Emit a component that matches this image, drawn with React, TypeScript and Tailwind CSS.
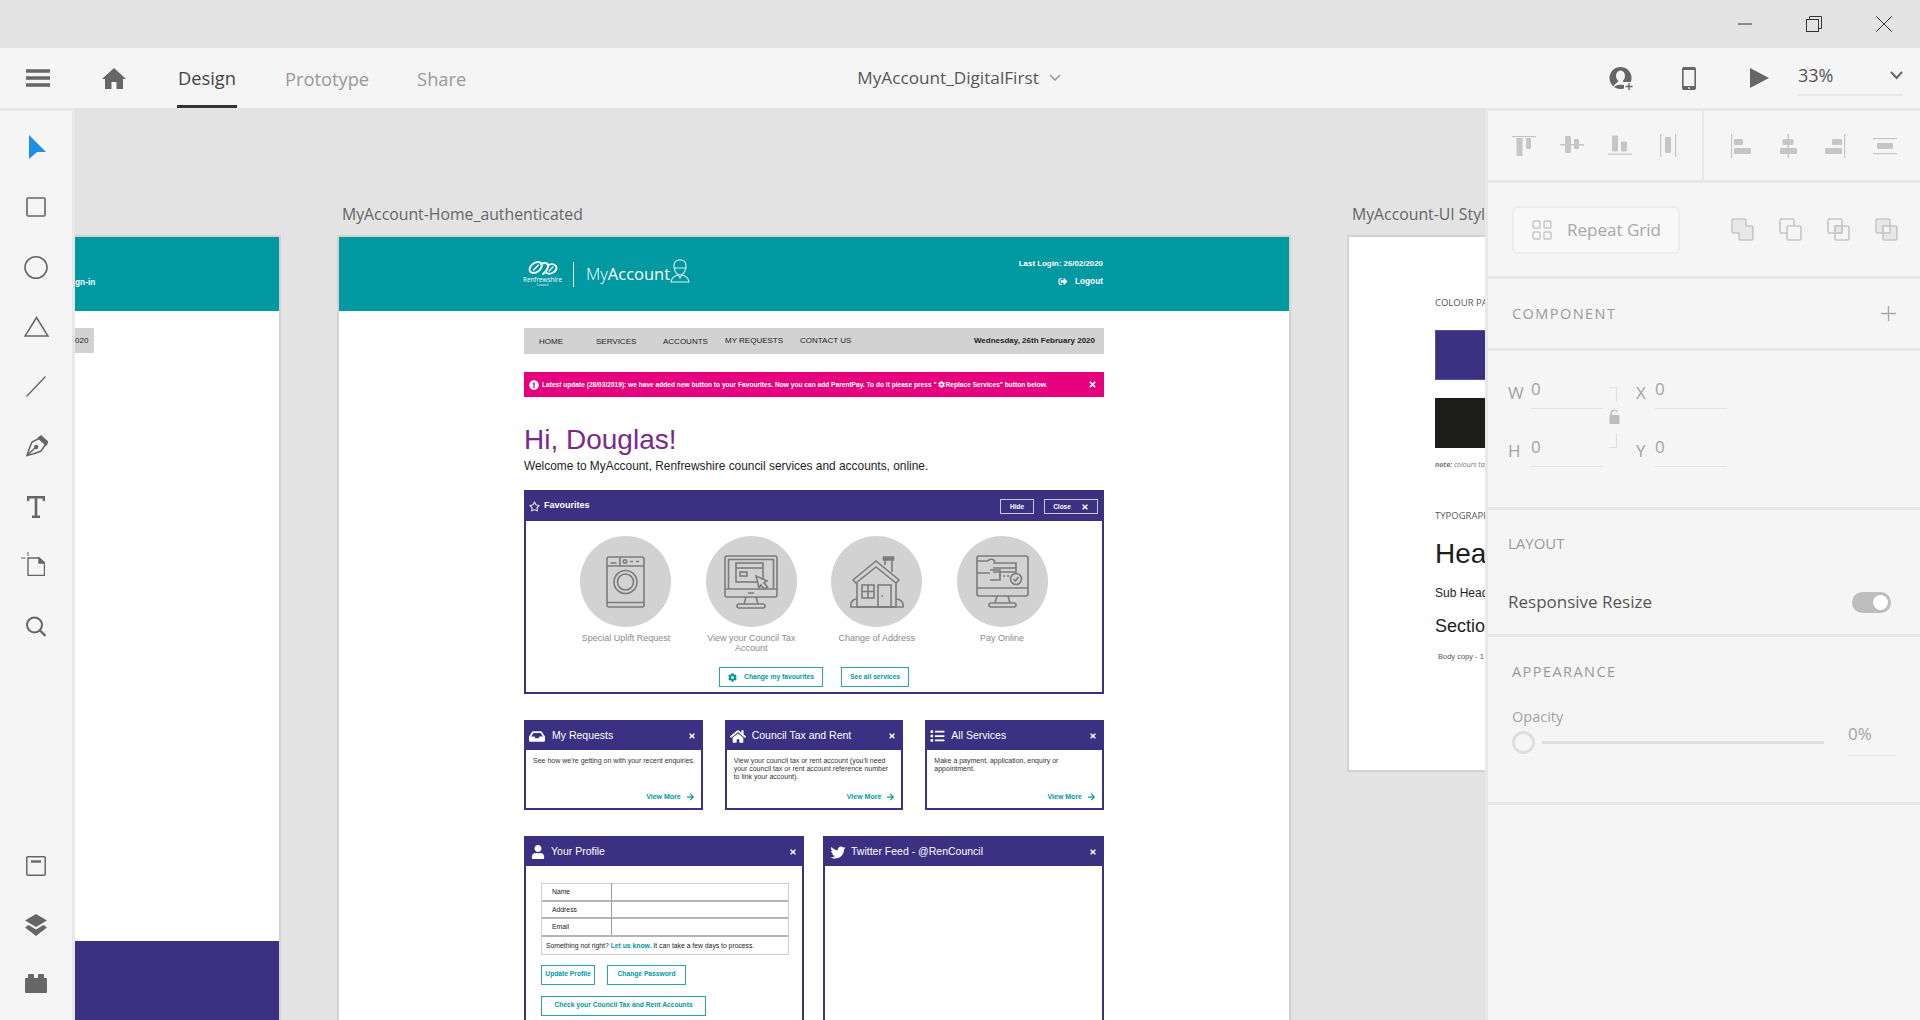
import type { ReactNode } from "react";
import {
  FaArrowRight,
  FaCog,
  FaExclamationCircle,
  FaHome,
  FaInbox,
  FaList,
  FaRegStar,
  FaSignOutAlt,
  FaTimes,
  FaTwitter,
  FaUser,
} from "react-icons/fa";

const ui = "font-['Open_Sans','Noto_Sans',sans-serif]";
const arial = "font-['Liberation_Sans',Arial,sans-serif]";

function Ic({ w, h, children, className = "" }: { w: number; h: number; children: ReactNode; className?: string }) {
  return (
    <svg width={w} height={h} viewBox={`0 0 ${w} ${h}`} className={`shrink-0 ${className}`}>
      {children}
    </svg>
  );
}

// left tool rail, y is the gap above each icon
const tools: { y: number; x: number; w: number; h: number; node: ReactNode }[] = [
  { y: 24, x: 3, w: 17, h: 24, node: <path d="M0 0 L17 17 L8 17 L0 24 Z" fill="#1c8fe6" /> },
  { y: 38, x: 0, w: 20, h: 20, node: <rect x="1" y="1" width="18" height="18" rx="1" fill="none" stroke="#666" strokeWidth="1.6" /> },
  { y: 39, x: -2, w: 24, h: 23, node: <ellipse cx="12" cy="11.5" rx="11" ry="10.7" fill="none" stroke="#666" strokeWidth="1.6" /> },
  { y: 37, x: -2, w: 25, h: 21, node: <path d="M12.5 1.5 L24 20 L1 20 Z" fill="none" stroke="#666" strokeWidth="1.5" /> },
  { y: 39, x: 0, w: 20, h: 21, node: <path d="M0.5 20.5 L19.5 0.5" stroke="#666" strokeWidth="1.3" /> },
  { y: 38, x: 0, w: 22, h: 22, node: (
    <g fill="none" stroke="#666" strokeWidth="1.6">
      <path d="M15 1 L21.5 7 L20 10 L12.5 3 Z" fill="#666" />
      <path d="M13 3.5 L6 7 C4 11 2.5 16 1 20.5 C6 19.5 11 18 15 16 L19.5 9.5" />
      <path d="M1.5 20 L9 13" />
      <circle cx="10.2" cy="12" r="1.4" fill="#666" />
    </g>
  ) },
  { y: 39, x: 1, w: 18, h: 22, node: <path d="M1 5 V1.3 H17 V5 M9 1 V20 M5 20.7 H13" fill="none" stroke="#666" strokeWidth="2.6" /> },
  { y: 34, x: -5, w: 24, h: 24, node: (
    <g fill="none" stroke="#666" strokeWidth="1.4">
      <path d="M7 6 H18 L23.5 11 V23.5 H7 Z" />
      <path d="M18 6 L23.5 11 H18 Z" fill="#666" />
      <path d="M0 6 H4.5 M7 0 V4" strokeWidth="1" />
    </g>
  ) },
  { y: 40, x: 0, w: 20, h: 21, node: (
    <g fill="none" stroke="#666" strokeWidth="2">
      <ellipse cx="8.5" cy="9" rx="7.5" ry="7.5" />
      <path d="M14 14.5 L19.5 20" strokeWidth="2.4" />
    </g>
  ) },
];

const bottomTools: { w: number; h: number; x: number; node: ReactNode }[] = [
  { w: 20, h: 20, x: 0, node: (
    <g fill="none" stroke="#666">
      <rect x="0.8" y="0.8" width="18.4" height="18.4" rx="1" strokeWidth="1.5" />
      <path d="M5 5.5 H15" strokeWidth="2.4" />
    </g>
  ) },
  { w: 22, h: 22, x: -1, node: (
    <g fill="#666">
      <path d="M11 0 L22 6.5 L11 13 L0 6.5 Z" />
      <path d="M3.5 11 L11 15.5 L18.5 11 L22 13.5 L11 22 L0 13.5 Z" />
    </g>
  ) },
  { w: 22, h: 19, x: -1, node: (
    <g fill="#666">
      <rect x="3" y="0" width="6" height="6" rx="1" />
      <rect x="13" y="0" width="6" height="6" rx="1" />
      <rect x="0" y="4" width="22" height="15" rx="1" />
    </g>
  ) },
];

function AlignIcon({ children }: { children: ReactNode }) {
  return (
    <Ic w={24} h={24}>
      <g fill="#c6c6c6">{children}</g>
    </Ic>
  );
}

const alignLeft: ReactNode[] = [
  <>
    <rect x="0" y="2" width="24" height="1.2" />
    <rect x="4.5" y="4" width="6" height="18" rx="1" />
    <rect x="14" y="4" width="5" height="11" rx="1" />
  </>,
  <>
    <rect x="0" y="10" width="24" height="1.5" />
    <rect x="5" y="2" width="6" height="17" rx="1" />
    <rect x="14" y="5" width="5" height="10" rx="1" />
  </>,
  <>
    <rect x="0" y="19.5" width="24" height="1.2" />
    <rect x="4" y="1.5" width="6" height="16" rx="1" />
    <rect x="13" y="7.5" width="6" height="10" rx="1" />
  </>,
  <>
    <rect x="4" y="0" width="1.2" height="23" />
    <rect x="19" y="0" width="1.2" height="23" />
    <rect x="9" y="3" width="6" height="16" rx="1" />
  </>,
];

const alignRight: ReactNode[] = [
  <>
    <rect x="2" y="0" width="1.2" height="24" />
    <rect x="5" y="5" width="9" height="6" rx="1" />
    <rect x="5" y="14" width="17" height="6" rx="1" />
  </>,
  <>
    <rect x="10.5" y="0" width="1.5" height="24" />
    <rect x="5.5" y="5" width="11" height="6" rx="1" />
    <rect x="3" y="14" width="17" height="6" rx="1" />
  </>,
  <>
    <rect x="19" y="0" width="1.2" height="24" />
    <rect x="7" y="5" width="10" height="6" rx="1" />
    <rect x="0" y="14" width="17" height="6" rx="1" />
  </>,
  <>
    <rect x="0" y="4" width="24" height="1.2" />
    <rect x="0" y="19" width="24" height="1.2" />
    <rect x="4" y="9" width="16" height="6" rx="1" />
  </>,
];

function BoolIcon({ n }: { n: number }) {
  const back = <rect x="1" y="1" width="14" height="14" rx="1.5" />;
  const front = <rect x="8" y="8" width="14" height="14" rx="1.5" />;
  return (
    <Ic w={24} h={24}>
      <g fill="none" stroke="#c6c6c6" strokeWidth="1.6">
        {n === 0 && <path d="M2.5 1 H13.5 Q15 1 15 2.5 V8 H20.5 Q22 8 22 9.5 V20.5 Q22 22 20.5 22 H9.5 Q8 22 8 20.5 V15 H2.5 Q1 15 1 13.5 V2.5 Q1 1 2.5 1 Z" fill="#e8e8e8" />}
        {n === 1 && (
          <>
            {back}
            <rect x="8" y="8" width="14" height="14" rx="1.5" fill="#f5f5f5" />
          </>
        )}
        {n === 2 && (
          <>
            {back}
            {front}
            <rect x="8" y="8" width="7" height="7" fill="#e8e8e8" />
          </>
        )}
        {n === 3 && (
          <>
            <rect x="1" y="1" width="14" height="14" rx="1.5" fill="#e8e8e8" />
            <rect x="8" y="8" width="14" height="14" rx="1.5" fill="#e8e8e8" />
            <rect x="8" y="8" width="7" height="7" fill="#f5f5f5" />
          </>
        )}
      </g>
    </Ic>
  );
}

function Underlined({ label, value, labelClass = "w-[23px]" }: { label: string; value: string; labelClass?: string }) {
  return (
    <div className="flex h-[48px] items-start">
      <span className={`mt-[10px] text-[17px] leading-[24px] text-[#a3a3a3] ${labelClass}`}>{label}</span>
      <div className="h-[38px] w-[72px] border-b border-[#e4e4e4] text-[17px] leading-[24px] text-[#a3a3a3]">
        <span className="mt-[6px] block">{value}</span>
      </div>
    </div>
  );
}

function Panel({ children, className = "" }: { children: ReactNode; className?: string }) {
  return <section className={`border-b-[3px] border-[#e8e8e8] ${className}`}>{children}</section>;
}

function RightPanel() {
  return (
    <aside className={`${ui} flex h-full w-[435px] shrink-0 flex-col border-t-[3px] border-l-[3px] border-[#e8e8e8] bg-[#f5f5f5]`}>
      <Panel className="flex h-[72px] items-center">
        <div className="flex h-full w-[216px] items-center gap-[24px] border-r-2 border-[#e8e8e8] pl-[24px]">
          {alignLeft.map((n, i) => (
            <AlignIcon key={i}>{n}</AlignIcon>
          ))}
        </div>
        <div className="flex items-center gap-[24px] pl-[25px]">
          {alignRight.map((n, i) => (
            <AlignIcon key={i}>{n}</AlignIcon>
          ))}
        </div>
      </Panel>
      <Panel className="flex h-[96px] items-center pl-[24px]">
        <div className="flex h-[48px] w-[168px] items-center rounded-[6px] border-2 border-[#ededed] bg-[#f8f8f8] pl-[18px]">
          <Ic w={20} h={20}>
            <g fill="none" stroke="#c6c6c6" strokeWidth="1.4">
              <rect x="1" y="1" width="7" height="7" rx="1" />
              <rect x="12" y="1" width="7" height="7" rx="1" />
              <rect x="1" y="12" width="7" height="7" rx="1" />
              <rect x="12" y="12" width="7" height="7" rx="1" />
            </g>
          </Ic>
          <span className="ml-[15px] text-[17px] whitespace-nowrap text-[#a8a8a8]">Repeat Grid</span>
        </div>
        <div className="ml-[51px] flex gap-[24px]">
          {[0, 1, 2, 3].map((n) => (
            <BoolIcon key={n} n={n} />
          ))}
        </div>
      </Panel>
      <Panel className="flex h-[72px] items-center justify-between pr-[24px] pl-[24px]">
        <span className="text-[14.5px] tracking-[0.1em] text-[#999]">COMPONENT</span>
        <Ic w={15} h={15}>
          <path d="M7.5 0 V15 M0 7.5 H15" stroke="#a8a8a8" strokeWidth="1.4" />
        </Ic>
      </Panel>
      <Panel className="flex h-[159px] pt-[20px] pl-[20px]">
        <div className="flex flex-col gap-[10px]">
          <Underlined label="W" value="0" />
          <Underlined label="H" value="0" />
        </div>
        <div className="mt-[16px] ml-[3px] flex h-[60px] w-[13px] shrink-0 flex-col items-start justify-between">
          <Ic w={14} h={61}>
            <path d="M3 0.5 H10.5 V15 M3 60.5 H10.5 V46" fill="none" stroke="#e0e0e0" strokeWidth="1.2" />
            <path d="M5 29 V26 A3.5 3.5 0 0 1 11.5 25" fill="none" stroke="#bdbdbd" strokeWidth="1.4" />
            <rect x="3.5" y="28" width="10" height="9" rx="1" fill="#bdbdbd" />
          </Ic>
        </div>
        <div className="ml-[17px] flex flex-col gap-[10px]">
          <Underlined label="X" value="0" labelClass="w-[19px]" />
          <Underlined label="Y" value="0" labelClass="w-[19px]" />
        </div>
      </Panel>
      <Panel className="h-[127px] pt-[19px] pr-[29px] pl-[20px]">
        <p className="text-[15px] leading-[28px] text-[#999]">LAYOUT</p>
        <div className="mt-[32px] flex items-center justify-between">
          <span className="text-[17px] leading-[26px] text-[#555]">Responsive Resize</span>
          <div className="flex h-[21px] w-[39px] items-center justify-end rounded-full bg-[#bdbdbd] pr-[3px]">
            <div className="h-[15px] w-[15px] rounded-full bg-white" />
          </div>
        </div>
      </Panel>
      <Panel className="h-[168px] pt-[24px] pr-[24px] pl-[24px]">
        <p className="text-[14.5px] leading-[22px] tracking-[0.1em] text-[#999]">APPEARANCE</p>
        <p className="mt-[23px] text-[14.5px] leading-[22px] text-[#a3a3a3]">Opacity</p>
        <div className="-mt-[6px] flex items-center">
          <div className="h-[23px] w-[23px] rounded-full border-[3px] border-[#dedede]" />
          <div className="ml-[7px] h-[3px] w-[282px] bg-[#dedede]" />
          <div className="mb-[6px] ml-[24px] h-[34px] w-[48px] border-b border-[#e4e4e4] text-[17px] leading-[24px] text-[#a3a3a3]">0%</div>
        </div>
      </Panel>
    </aside>
  );
}

function LogoMark() {
  return (
    <div className="flex w-[37px] flex-col items-center text-white">
      <Ic w={30} h={15}>
        <g fill="none" stroke="#fff" strokeWidth="1.9" strokeLinecap="round">
          <path d="M1.5 9 C2 3 8 0 12.5 1.5 C15.5 3 13 10 8 11.5 C4 12.5 1.5 11 1.5 9 Z" />
          <path d="M13 3 C17 1 21 2 20 6 C19 10 16 12 15 13" />
          <path d="M20 4.5 C23 2 28.5 3 28.5 7 C28.5 11 22 14 18.5 12" />
          <path d="M5.5 9 L10.5 4 M21 10 L25 6" strokeWidth="1.2" />
        </g>
      </Ic>
      <span className={`${ui} text-[6.3px] leading-[7px] whitespace-nowrap`}>Renfrewshire</span>
      <span className={`${ui} text-[3.5px] leading-[4px] whitespace-nowrap`}>Council</span>
    </div>
  );
}

const navItems = [
  { label: "HOME", w: 57, up: false },
  { label: "SERVICES", w: 67, up: false },
  { label: "ACCOUNTS", w: 62, up: false },
  { label: "MY REQUESTS", w: 75, up: true },
  { label: "CONTACT US", w: 70, up: true },
];

function Artboard({ children, className }: { children: ReactNode; className: string }) {
  return <div className={`absolute border-2 border-[#d2d2d2] bg-white ${className}`}>{children}</div>;
}

function WasherIcon() {
  return (
    <svg width="40" height="52" viewBox="0 0 40 52" fill="none" stroke="#7c7c7c" strokeWidth="1.6">
      <rect x="1" y="1" width="37" height="50" rx="2" />
      <path d="M1 10 H38 M14 1 V10 M1 46.5 H38" />
      <path d="M4.5 7 H10.5 M24 5.5 H27 M30 5.5 H33" />
      <circle cx="19" cy="5.5" r="1.7" />
      <circle cx="19.5" cy="26" r="11.5" />
      <circle cx="19.5" cy="26" r="8" />
    </svg>
  );
}

function TaxIcon() {
  return (
    <svg width="54" height="54" viewBox="0 0 54 54" fill="none" stroke="#7c7c7c" strokeWidth="1.6">
      <rect x="1" y="1" width="52" height="41" rx="2" />
      <path d="M4.5 34 V4.5 H49.5 V34 M1 34 H53 M24 38 H30" />
      <path d="M22 42 L20 49 M32 42 L34 49" />
      <rect x="13" y="49" width="28" height="4" rx="2" />
      <rect x="12" y="8" width="27" height="19" />
      <path d="M12 13 H39" />
      <rect x="16" y="17" width="7" height="4" />
      <path d="M32 21 L43 26 L40 28 L43.5 32 L40 34 L37 30 L35 33 Z" fill="#d2d2d2" />
    </svg>
  );
}

function HouseIcon() {
  return (
    <svg width="54" height="52" viewBox="0 0 54 52" fill="none" stroke="#7c7c7c" strokeWidth="1.6">
      <path d="M3 24 L26 5 L49 24 L46 27 L26 11 L6 27 Z" />
      <path d="M35 9 V2.5 H42 V16 M33.5 1 H43.5 V4 H33.5 Z" />
      <path d="M7 27 V51 H46 V27" />
      <path d="M7 43 C3 43 0 46 1 51 H53 C54 46 50 43 46 43" />
      <rect x="12" y="29" width="12" height="13" />
      <path d="M18 29 V42 M12 35.5 H24" />
      <rect x="28" y="29" width="13" height="22" />
      <path d="M31.5 40 H33" />
    </svg>
  );
}

function PayIcon() {
  return (
    <svg width="53" height="54" viewBox="0 0 53 54" fill="none" stroke="#7c7c7c" strokeWidth="1.6">
      <rect x="1" y="1" width="51" height="40" rx="2" />
      <path d="M1 33 H52 M1 18 H14 M1 6 H11 C15 3 18 4 19 7" />
      <path d="M21 41 L19 48 M32 41 L34 48" />
      <rect x="13" y="48" width="27" height="4" rx="2" />
      <path d="M17 8 H40 V22 M17 13 H40 M17 17 H40" />
      <path d="M14 15 H24 V25 H14" />
      <path d="M23 21 H33" strokeDasharray="2 2" />
      <circle cx="40" cy="24" r="5.5" fill="#d2d2d2" />
      <path d="M37.5 24 L39.5 26 L42.5 22" />
    </svg>
  );
}

const favourites = [
  { label: "Special Uplift Request", icon: <WasherIcon /> },
  { label: "View your Council Tax Account", icon: <TaxIcon /> },
  { label: "Change of Address", icon: <HouseIcon /> },
  { label: "Pay Online", icon: <PayIcon /> },
];

const cards = [
  {
    title: "My Requests",
    icon: <FaInbox className="h-[15px] w-[16px]" />,
    body: "See how we're getting on with your recent enquiries.",
    gap: "gap-[7px]",
  },
  {
    title: "Council Tax and Rent",
    icon: <FaHome className="h-[15px] w-[16px]" />,
    body: "View your council tax or rent account (you'll need\nyour council tax or rent account reference number\nto link your account).",
    gap: "gap-[6px]",
  },
  {
    title: "All Services",
    icon: <FaList className="h-[14px] w-[15px]" />,
    body: "Make a payment, application, enquiry or\nappointment.",
    gap: "gap-[6px]",
  },
];

function TealButton({ children, className }: { children: ReactNode; className: string }) {
  return (
    <div className={`flex h-[20px] items-center justify-center border border-[#2aa3a9] text-[6.7px] font-bold whitespace-nowrap text-[#00989f] ${className}`}>
      {children}
    </div>
  );
}

function HomeBoard() {
  return (
    <Artboard className={`${arial} top-[127px] left-[262px] h-[1000px] w-[954px] overflow-hidden`}>
      <header className="flex h-[74px] justify-center bg-[#0098a1]">
        <div className="flex h-full w-[580px] items-start justify-between">
          <div className="mt-[24px] flex items-center">
            <LogoMark />
            <div className="mx-[12px] h-[25px] w-px bg-white" />
            <span className={`${ui} text-[16.5px] leading-[26px] font-light whitespace-nowrap text-white`}>
              My<span className="font-normal">Account</span>
            </span>
            <Ic w={20} h={24} className="-mt-[6px]">
              <g fill="none" stroke="#d9f0f1" strokeWidth="1.1">
                <path d="M4.5 9 C4.5 14 8 16 10 16 C12 16 15.5 14 15.5 9" />
                <path d="M4 9 V6.5 C4 -1 16 -1 16 6.5 V9 Z" />
                <path d="M1 23 C1.5 18 6 16.5 8 16 L10 19 L12 16 C14 16.5 18.5 18 19 23 Z" />
              </g>
            </Ic>
          </div>
          <div className="mt-[19px] mr-px flex flex-col items-end text-white">
            <span className="text-[7.9px] leading-[16px] font-bold whitespace-nowrap">Last Login: 26/02/2020</span>
            <span className="flex items-center gap-[7px] text-[8.3px] leading-[18px] font-bold whitespace-nowrap">
              <FaSignOutAlt className="h-[9px] w-[10px]" /> Logout
            </span>
          </div>
        </div>
      </header>
      <div className="mx-auto w-[580px]">
        <nav className="mt-[17px] flex h-[26px] items-center justify-between bg-[#d2d2d2] pr-[9px] pl-[15px] text-[8px] text-[#222]">
          <div className="flex items-center">
            {navItems.map((n) => (
              <span key={n.label} style={{ width: n.w }} className={`whitespace-nowrap ${n.up ? "" : "pt-[2px]"}`}>
                {n.label}
              </span>
            ))}
          </div>
          <span className="font-bold whitespace-nowrap">Wednesday, 26th February 2020</span>
        </nav>
        <div className="mt-[18px] flex h-[25px] items-center justify-between bg-[#e6007e] pr-[7px] pl-[5px] text-white">
          <div className="flex items-center gap-[3px] text-[6.6px] font-bold whitespace-nowrap">
            <FaExclamationCircle className="h-[10px] w-[10px]" />
            <span className="inline-flex items-center">
              Latest update (28/03/2019): we have added new button to your Favourites. Now you can add ParentPay. To do it please press "
              <FaCog className="mx-px h-[7px] w-[7px]" /> Replace Services" button below.
            </span>
          </div>
          <FaTimes className="h-[9px] w-[9px]" />
        </div>
        <h1 className="mt-[26px] text-[28px] leading-[34px] font-normal text-[#7b2a8c]">Hi, Douglas!</h1>
        <p className="mt-px text-[11.9px] leading-[16px] text-[#1d1d1b]">Welcome to MyAccount, Renfrewshire council services and accounts, online.</p>

        <section className="mt-[16px] flex h-[204px] flex-col border-2 border-[#3c3082]">
          <div className="flex h-[29px] shrink-0 items-center justify-between bg-[#3c3082] pr-[4px] pl-[3px] text-white">
            <div className="flex items-center gap-[4px] pb-[1px] text-[9px] font-bold">
              <FaRegStar className="h-[11px] w-[11px]" /> Favourites
            </div>
            <div className="flex items-center gap-[10px] text-[6.5px] font-bold">
              <span className="flex h-[15px] w-[34px] items-center justify-center border border-[#c9c6e0]">Hide</span>
              <span className="flex h-[15px] w-[54px] items-center justify-center gap-[10px] border border-[#c9c6e0]">
                Close <FaTimes className="h-[8px] w-[8px]" />
              </span>
            </div>
          </div>
          <div className="flex justify-center pt-[15px]">
            {favourites.map((f) => (
              <div key={f.label} className="flex w-[125.4px] flex-col items-center">
                <div className="flex h-[91px] w-[91px] items-center justify-center rounded-full bg-[#d2d2d2]">{f.icon}</div>
                <p className="mt-[6px] w-[96px] text-center text-[9px] leading-[10px] text-[#8a8a8a]">{f.label}</p>
              </div>
            ))}
          </div>
          <div className="mt-auto flex justify-center gap-[18px] pb-[5px]">
            <TealButton className="w-[104px] gap-[7px]">
              <FaCog className="h-[9px] w-[9px]" /> Change my favourites
            </TealButton>
            <TealButton className="w-[68px]">See all services</TealButton>
          </div>
        </section>

        <div className="mt-[26px] grid grid-cols-3 gap-[22px]">
          {cards.map((c) => (
            <section key={c.title} className="flex h-[90px] flex-col border-2 border-[#3c3082]">
              <div className="flex h-[28px] shrink-0 items-center bg-[#3c3082] pr-[5px] pl-[3px] text-white">
                <span className={`flex min-w-0 flex-1 items-center ${c.gap} text-[10.5px] whitespace-nowrap`}>
                  {c.icon}
                  {c.title}
                </span>
                <FaTimes className="h-[8px] w-[8px]" />
              </div>
              <p className="pt-[7px] pl-[7px] text-[7px] leading-[8px] whitespace-pre-line text-[#333]">{c.body}</p>
              <div className="mt-auto flex items-center justify-end gap-[5px] pr-[6px] pb-[6px] text-[7px] font-bold text-[#00989f]">
                View More <FaArrowRight className="h-[8px] w-[9px]" />
              </div>
            </section>
          ))}
        </div>

        <div className="mt-[26px] grid grid-cols-[280px_281px] gap-[19px]">
          <section className="h-[300px] border-2 border-[#3c3082]">
            <div className="flex h-[28px] items-center justify-between bg-[#3c3082] pr-[5px] pl-[5px] text-white">
              <span className="flex items-center gap-[6px] text-[10.5px]">
                <FaUser className="h-[14px] w-[14px]" /> Your Profile
              </span>
              <FaTimes className="h-[8px] w-[8px]" />
            </div>
            <div className="px-[15px] pt-[17px]">
              <div className="w-[248px] border border-[#cfcfcf] text-[6.8px] text-[#222]">
                {["Name", "Address", "Email"].map((l) => (
                  <div key={l} className="flex h-[17.5px] items-center border-b-2 border-[#b5b5b5]">
                    <span className="w-[70px] border-r border-[#9c9c9c] pl-[10px] leading-[17px]">{l}</span>
                  </div>
                ))}
                <p className="pl-[4px] text-[6.8px] leading-[17px]">
                  Something not right? <span className="font-bold text-[#00989f]">Let us know.</span> It can take a few days to process.
                </p>
              </div>
              <div className="mt-[10px] flex gap-[12px]">
                <TealButton className="w-[54px]">Update Profile</TealButton>
                <TealButton className="w-[79px]">Change Password</TealButton>
              </div>
              <TealButton className="mt-[11px] w-[165px]">Check your Council Tax and Rent Accounts</TealButton>
            </div>
          </section>
          <section className="h-[300px] border-2 border-[#3c3082]">
            <div className="flex h-[28px] items-center justify-between bg-[#3c3082] pr-[5px] pl-[5px] text-white">
              <span className="flex items-center gap-[5px] text-[10.5px] whitespace-nowrap">
                <FaTwitter className="h-[15px] w-[16px]" /> Twitter Feed - @RenCouncil
              </span>
              <FaTimes className="h-[8px] w-[8px]" />
            </div>
          </section>
        </div>
      </div>
    </Artboard>
  );
}

function SignInBoard() {
  return (
    <Artboard className={`${arial} top-[127px] left-0 flex h-[1000px] w-[206px] flex-col border-l-0`}>
      <div className="flex h-[74px] shrink-0 items-center overflow-hidden bg-[#0098a1] pt-[16px] text-[8.3px] font-bold text-white">
        <span>gn-in</span>
      </div>
      <div className="mt-[17px] flex h-[25px] w-[19px] shrink-0 items-center overflow-hidden bg-[#d2d2d2] text-[8px] text-[#222]">
        <span>020</span>
      </div>
      <div className="mt-[588px] flex-1 bg-[#3c3082]" />
    </Artboard>
  );
}

function StyleBoard() {
  return (
    <Artboard className={`${arial} top-[127px] left-[1272px] h-[537px] w-[200px] overflow-hidden border-r-0 pt-[59px] pl-[86px]`}>
      <p className={`${ui} text-[9.5px] leading-[14px] whitespace-nowrap text-[#555]`}>COLOUR PALETTE</p>
      <div className="mt-[20px] h-[50px] w-[60px] border border-[#5a4f9a] bg-[#3c3082]" />
      <div className="mt-[18px] h-[50px] w-[60px] bg-[#1d1d1b]" />
      <p className={`${ui} mt-[12px] text-[7px] leading-[10px] whitespace-nowrap text-[#777] italic`}>
        <b>note:</b> colours taken
      </p>
      <p className={`${ui} mt-[39px] text-[9.5px] leading-[14px] whitespace-nowrap text-[#555]`}>TYPOGRAPHY</p>
      <p className="mt-[15px] text-[28px] leading-[32px] whitespace-nowrap text-[#1d1d1b]">Heading</p>
      <p className="mt-[16px] text-[12px] leading-[14px] whitespace-nowrap text-[#1d1d1b]">Sub Heading</p>
      <p className="mt-[15px] text-[18px] leading-[22px] whitespace-nowrap text-[#1d1d1b]">Section</p>
      <p className="mt-[15px] pl-[3px] text-[7.5px] leading-[10px] whitespace-nowrap text-[#555]">Body copy - 1</p>
    </Artboard>
  );
}

export default function App() {
  return (
    <div className={`${ui} flex h-[1020px] w-[1920px] flex-col overflow-hidden bg-[#e3e3e3]`}>
      <div className="flex h-[48px] shrink-0 items-center justify-end pr-[28px]">
        <Ic w={14} h={2} className="mr-[54px]">
          <path d="M0 1 H14" stroke="#333" strokeWidth="1" />
        </Ic>
        <Ic w={16} h={16} className="mr-[54px]">
          <path d="M3.5 3.5 V0.5 H15.5 V12.5 H12.5" fill="none" stroke="#333" />
          <rect x="0.5" y="3.5" width="12" height="12" fill="none" stroke="#333" />
        </Ic>
        <Ic w={16} h={16}>
          <path d="M0.5 0.5 L15.5 15.5 M15.5 0.5 L0.5 15.5" stroke="#333" />
        </Ic>
      </div>

      <div className="flex h-[60px] shrink-0 items-center bg-[#f5f5f5]">
        <Ic w={24} h={18} className="ml-[26px]">
          <path d="M0 2 H24 M0 9 H24 M0 16 H24" stroke="#666" strokeWidth="3.4" />
        </Ic>
        <Ic w={24} h={21} className="ml-[52px]">
          <path d="M12 0 L24 11 H21 V21 H14.5 V14 H9.5 V21 H3 V11 H0 Z" fill="#666" />
        </Ic>
        <div className="ml-[51px] flex h-full items-center text-[18.3px]">
          <span className="flex h-full w-[60px] items-center justify-center border-b-[3px] border-[#333] pt-[3px] text-[#444]">Design</span>
          <span className="ml-[48px] pt-[1px] text-[#999]">Prototype</span>
          <span className="ml-[48px] pt-[1px] text-[#999]">Share</span>
        </div>
        <div className="ml-[391px] flex items-center gap-[10px] text-[#555]">
          <span className="text-[17.2px]">MyAccount_DigitalFirst</span>
          <Ic w={12} h={8}>
            <path d="M1 1 L6 6 L11 1" fill="none" stroke="#999" strokeWidth="1.5" />
          </Ic>
        </div>
        <div className="ml-auto flex h-full items-center pr-[17px]">
          <Ic w={25} h={23}>
            <circle cx="11.5" cy="11" r="11" fill="#666" />
            <ellipse cx="11.5" cy="9" rx="4.5" ry="5.5" fill="#f5f5f5" />
            <path d="M4 20 C6 16 9 16 9 14 H14 C14 16 17 16 19 18" fill="#f5f5f5" />
            <path d="M5.5 19.5 C8 17 15 17 17.5 19.5 L11.5 22 Z" fill="#666" />
            <rect x="15" y="15" width="10" height="9" fill="#f5f5f5" />
            <path d="M20 16 V23 M16.5 19.5 H23.5" stroke="#666" strokeWidth="1.4" />
          </Ic>
          <Ic w={14} h={23} className="ml-[48px]">
            <rect x="0" y="0" width="14" height="23" rx="2" fill="#666" />
            <rect x="1.6" y="3" width="10.8" height="16" fill="#f5f5f5" />
            <circle cx="7" cy="21" r="0.9" fill="#f5f5f5" />
          </Ic>
          <Ic w={19} h={20} className="ml-[54px]">
            <path d="M0 0 L19 10 L0 20 Z" fill="#666" />
          </Ic>
          <div className="ml-[29px] flex h-[36px] w-[105px] items-center justify-between border-b-2 border-[#e8e8e8] pb-[4px] text-[18px] text-[#555]">
            33%
            <Ic w={13} h={9}>
              <path d="M1 1 L6.5 7 L12 1" fill="none" stroke="#666" strokeWidth="2" />
            </Ic>
          </div>
        </div>
      </div>

      <div className="flex min-h-0 flex-1">
        <aside className="flex w-[75px] shrink-0 flex-col items-start border-t-[3px] border-r-[3px] border-[#e8e8e8] bg-[#f5f5f5] pb-[27px] pl-[26px]">
          {tools.map((t, i) => (
            <svg key={i} width={t.w} height={t.h} viewBox={`0 0 ${t.w} ${t.h}`} style={{ marginTop: t.y, marginLeft: t.x }}>
              {t.node}
            </svg>
          ))}
          <div className="mt-auto flex flex-col items-start gap-[38px]">
            {bottomTools.map((t, i) => (
              <svg key={i} width={t.w} height={t.h} viewBox={`0 0 ${t.w} ${t.h}`} style={{ marginLeft: t.x }}>
                {t.node}
              </svg>
            ))}
          </div>
        </aside>

        <main className="relative min-w-0 flex-1 overflow-hidden">
          <p className="absolute top-[94px] left-[267px] text-[15.8px] leading-[24px] whitespace-nowrap text-[#666]">MyAccount-Home_authenticated</p>
          <p className="absolute top-[94px] left-[1277px] text-[15.8px] leading-[24px] whitespace-nowrap text-[#666]">MyAccount-UI Style</p>
          <SignInBoard />
          <HomeBoard />
          <StyleBoard />
        </main>

        <RightPanel />
      </div>
    </div>
  );
}
